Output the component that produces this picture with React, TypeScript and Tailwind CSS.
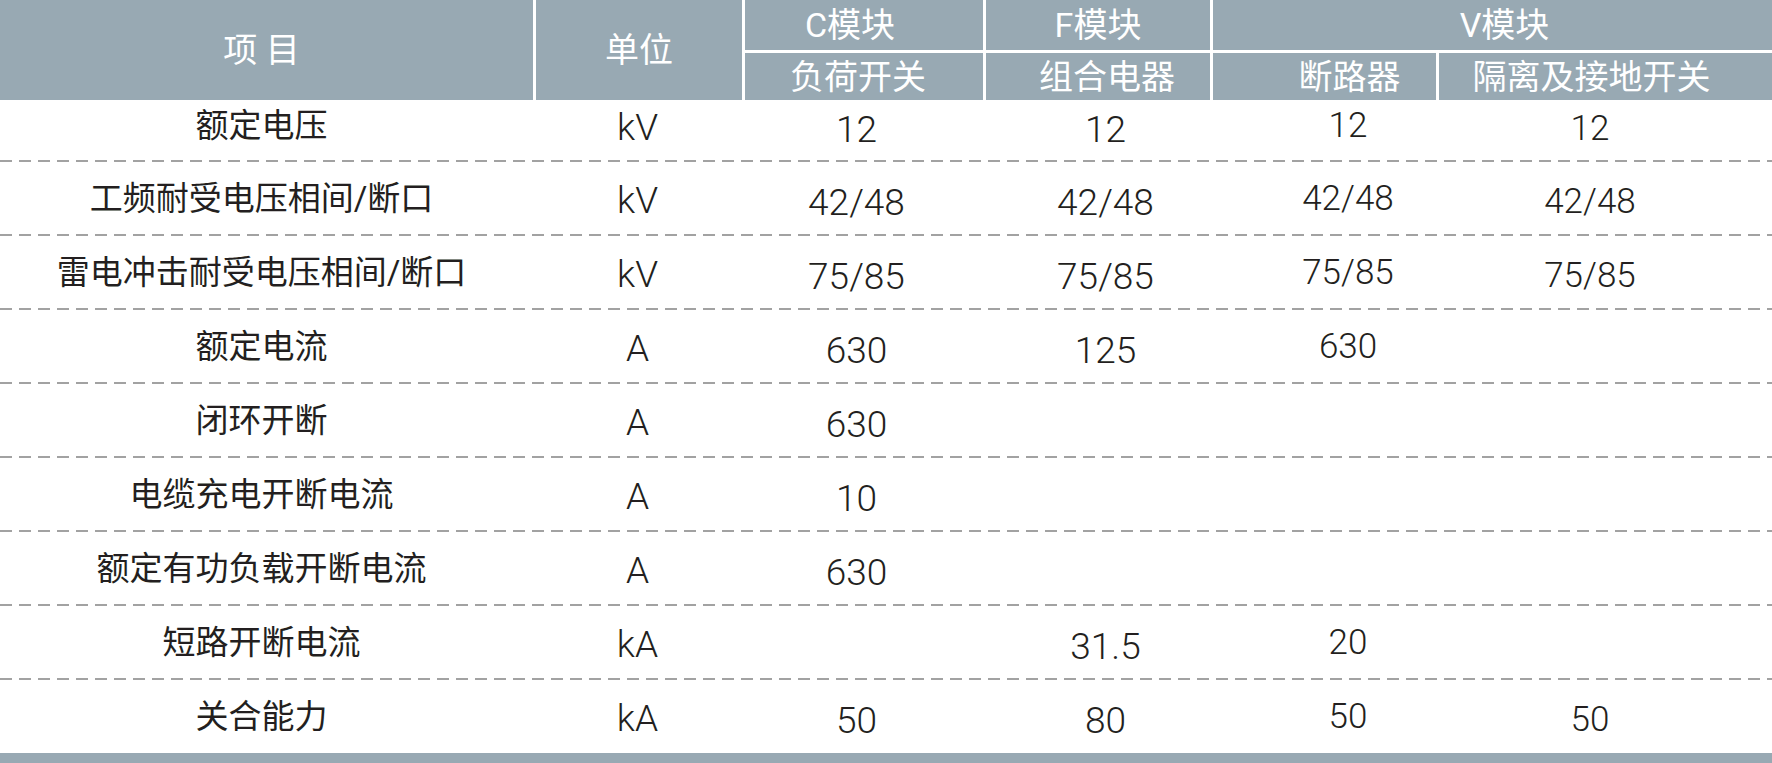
import React from 'react';

type Row = {
  name: string;
  unit: string;
  c: string;
  f: string;
  vb: string;
  vd: string;
};

const rows: Row[] = [
  { name: '额定电压', unit: 'kV', c: '12', f: '12', vb: '12', vd: '12' },
  { name: '工频耐受电压相间/断口', unit: 'kV', c: '42/48', f: '42/48', vb: '42/48', vd: '42/48' },
  { name: '雷电冲击耐受电压相间/断口', unit: 'kV', c: '75/85', f: '75/85', vb: '75/85', vd: '75/85' },
  { name: '额定电流', unit: 'A', c: '630', f: '125', vb: '630', vd: '' },
  { name: '闭环开断', unit: 'A', c: '630', f: '', vb: '', vd: '' },
  { name: '电缆充电开断电流', unit: 'A', c: '10', f: '', vb: '', vd: '' },
  { name: '额定有功负载开断电流', unit: 'A', c: '630', f: '', vb: '', vd: '' },
  { name: '短路开断电流', unit: 'kA', c: '', f: '31.5', vb: '20', vd: '' },
  { name: '关合能力', unit: 'kA', c: '50', f: '80', vb: '50', vd: '50' },
];

const cols = 'grid grid-cols-[533px_209px_241px_227px_226px_1fr]';

const Dash = () => (
  <div className="h-[2px] w-full bg-[repeating-linear-gradient(to_right,#a2a2a2_0_12px,transparent_12px_19px)]" />
);

export default function App() {
  return (
    <div className="w-[1772px] bg-white font-['Roboto','Noto_Sans_CJK_SC',sans-serif] font-light text-[#231f20]">
      {/* header */}
      <div className={`${cols} h-[100px] grid-rows-[50px_50px] bg-[#98a9b3] text-[34px] font-normal leading-none text-white`}>
        <div className="row-span-2 flex items-center justify-center pr-[10px]">项 目</div>
        <div className="row-span-2 flex items-center justify-center border-l-[3px] border-white">单位</div>
        <div className="flex items-center justify-center border-l-[3px] border-white pr-[28px]">C模块</div>
        <div className="flex items-center justify-center border-l-[3px] border-white">F模块</div>
        <div className="col-span-2 flex items-center justify-center border-l-[3px] border-white pl-[24px]">V模块</div>
        <div className="flex items-center justify-center border-l-[3px] border-t-[3px] border-white pr-[12px]">负荷开关</div>
        <div className="flex items-center justify-center border-l-[3px] border-t-[3px] border-white pl-[18px]">组合电器</div>
        <div className="flex items-center justify-center border-l-[3px] border-t-[3px] border-white pl-[50px]">断路器</div>
        <div className="flex items-center justify-center border-l-[3px] border-t-[3px] border-white pr-[28px]">隔离及接地开关</div>
      </div>

      {/* body */}
      {rows.map((r, i) => (
        <div key={r.name}>
          <div
            className={`${cols} leading-none ${
              i === 0 ? 'h-[60px] pb-[10px]' : i === rows.length - 1 ? 'h-[73px]' : 'h-[72px]'
            }`}
          >
            <div className="flex items-center justify-center pr-[10px] text-[33px] font-normal">{r.name}</div>
            <div className="flex items-center justify-center pt-[4px] text-[37px]">{r.unit}</div>
            <div className="flex items-center justify-center pr-[12px] pt-[8px] text-[37px]">{r.c}</div>
            <div className="flex items-center justify-center pl-[18px] pt-[8px] text-[37px]">{r.f}</div>
            <div className="flex items-center justify-center pl-[50px] text-[35px]">{r.vb}</div>
            <div className="flex items-center justify-center pr-[28px] pt-[6px] text-[35px]">{r.vd}</div>
          </div>
          {i < rows.length - 1 && <Dash />}
        </div>
      ))}

      {/* bottom bar */}
      <div className="h-[10px] bg-[#98a9b3]" />
    </div>
  );
}
